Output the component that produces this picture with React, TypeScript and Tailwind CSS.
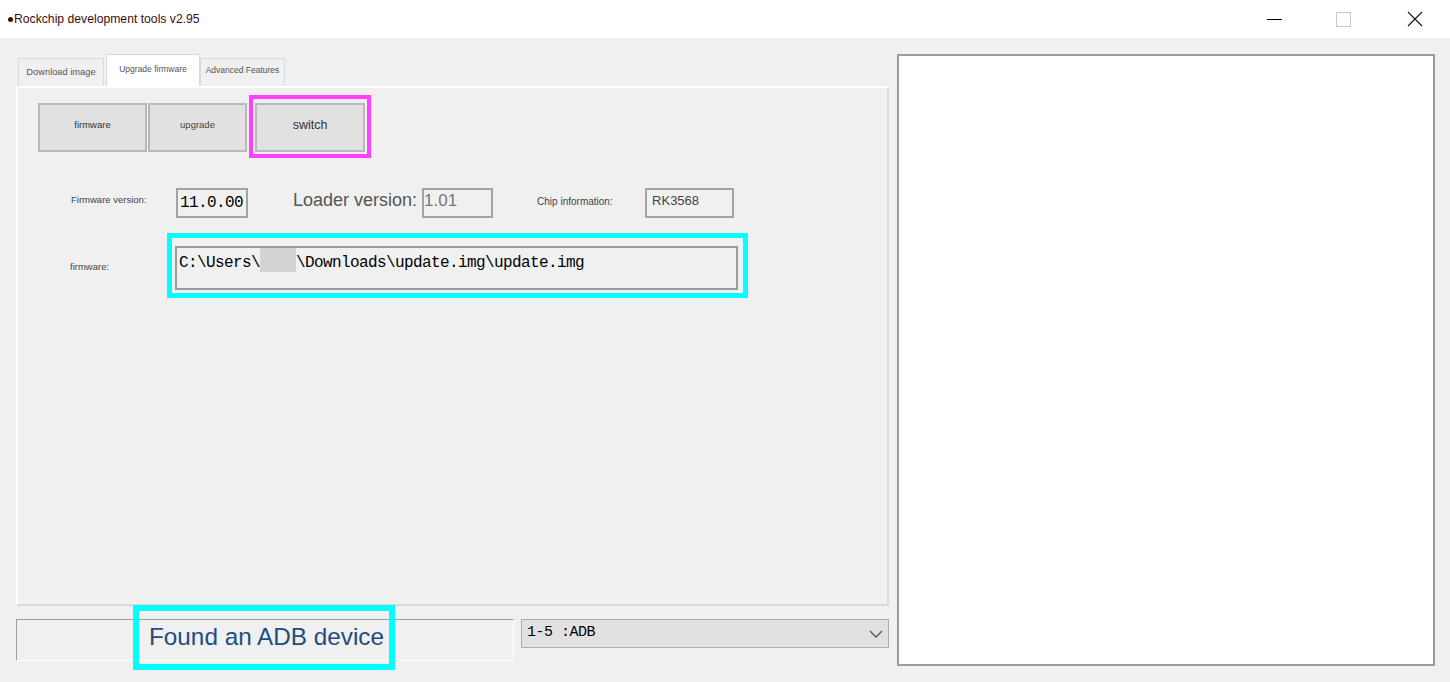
export default function App() {
  return (
    <div className="w-[1450px] h-[682px] bg-[#f0f0f0] overflow-hidden font-['Liberation_Sans',Arial,sans-serif]">
      {/* title bar */}
      <div className="h-[38px] bg-white flex items-center relative">
        <div className="flex items-center pl-[8px] text-[12.2px] text-[#3c0d0d]">
          <span className="w-[5px] h-[5px] rounded-full bg-[#3c0d0d] mr-[1px] mt-[1px]"></span>
          Rockchip development tools v2.95
        </div>
        <div className="ml-auto flex items-center h-full">
          <div className="w-[15px] h-[1px] bg-black mr-[54px]"></div>
          <div className="w-[15px] h-[15px] border border-[#c8c8c8] mr-[56px]"></div>
          <svg width="16" height="16" viewBox="0 0 16 16" className="mr-[27px]">
            <path d="M1 1 L15 15 M15 1 L1 15" stroke="#111" strokeWidth="1.1" fill="none" />
          </svg>
        </div>
      </div>

      <div className="flex pl-[16px] pt-[16px] gap-[8px]">
        {/* left column */}
        <div className="w-[873px] flex flex-col">
          {/* tabs */}
          <div className="h-[32px] flex items-end pl-[2px] text-[#555]">
            <div className="w-[86px] h-[28px] border border-b-0 border-[#d9d9d9] bg-[#f0f0f0] flex items-center justify-center text-[9.3px]">
              Download image
            </div>
            <div className="w-[94px] h-[32px] ml-[2px] border border-b-0 border-[#d9d9d9] bg-white flex items-center justify-center text-[8.5px] pb-[2px]">
              Upgrade firmware
            </div>
            <div className="w-[85px] h-[27px] mb-[1px] border border-b-0 border-[#d9d9d9] bg-[#f0f0f0] flex items-center justify-center text-[8.5px] pb-[3px]">
              Advanced Features
            </div>
          </div>

          {/* panel */}
          <div className="h-[520px] border-2 border-t-white border-l-white border-r-[#dadada] border-b-[#dadada] bg-[#f0f0f0] flex flex-col">
            <div className="flex items-start pl-[20px] pt-[7px]">
              <div className="mt-[8px] w-[109px] h-[49px] bg-[#e1e1e1] border-2 border-[#b9b9b9] flex items-center justify-center pb-[4px] text-[9.5px] text-[#333]">
                firmware
              </div>
              <div className="mt-[8px] ml-[1px] w-[99px] h-[49px] bg-[#e1e1e1] border-2 border-[#b9b9b9] flex items-center justify-center pb-[4px] text-[9.5px] text-[#444]">
                upgrade
              </div>
              <div className="ml-[2px] border-[4px] border-[#ff40ff] pt-[4px] pb-[2px] px-[2px]">
                <div className="w-[110px] h-[49px] bg-[#e1e1e1] border-2 border-[#b9b9b9] flex items-center justify-center pb-[4px] text-[12.5px] text-[#333]">
                  switch
                </div>
              </div>
            </div>

            <div className="flex items-center mt-[30px] h-[30px]">
              <div className="ml-[53px] w-[105px] text-[9.5px] text-[#444] -mt-[6px]">Firmware version:</div>
              <div className="w-[72px] h-[30px] border-2 border-[#a3a3a3] flex items-center pl-[2px] font-['Liberation_Mono',monospace] text-[16px] tracking-[-0.6px] text-black">
                11.0.00
              </div>
              <div className="ml-[45px] text-[18px] text-[#555] -mt-[6px]">Loader version:</div>
              <div className="ml-[5px] w-[71px] h-[30px] border-2 border-[#a3a3a3] flex items-start -mt-[0px] pl-0 text-[17px] leading-[22px] text-[#777]">
                1.01
              </div>
              <div className="ml-[44px] w-[108px] text-[10px] text-[#444] -mt-[4px]">Chip information:</div>
              <div className="w-[89px] h-[30px] border-2 border-[#a3a3a3] flex items-start pt-[1px] pl-[5px] text-[13px] text-[#444]">
                RK3568
              </div>
            </div>

            <div className="flex items-center mt-[15px]">
              <div className="ml-[52px] w-[97px] text-[9.5px] text-[#444] mt-[3px]">firmware:</div>
              <div className="border-[5px] border-[#00ffff] pl-[3px] pr-[5px] pt-[8px] pb-[3px]">
                <div className="w-[563px] h-[44px] border-2 border-[#9c9c9c] flex items-start pt-[0px] pl-[2px] font-['Liberation_Mono',monospace] text-[16px] tracking-[-0.6px] text-black">
                  <span className="pt-[3px]">C:\Users\</span>
                  <span className="w-[36px] h-[24px] bg-[#d3d3d3]"></span>
                  <span className="pt-[3px]">\Downloads\update.img\update.img</span>
                </div>
              </div>
            </div>
          </div>

          {/* status row */}
          <div className="flex items-start gap-[7px] mt-[13px] relative">
            <div className="w-[498px] h-[42px] border border-t-[#a0a0a0] border-l-[#a0a0a0] border-r-white border-b-white"></div>
            <div className="w-[368px] h-[29px] bg-[#e1e1e1] border border-[#adadad] flex items-center pl-[5px] font-['Liberation_Mono',monospace] text-[15px] tracking-[-0.5px] text-black">
              <span>1-5 :ADB</span>
              <svg width="14" height="8" viewBox="0 0 14 8" className="ml-auto mr-[5px]">
                <path d="M1 1 L7 7 L13 1" stroke="#555" strokeWidth="1.3" fill="none" />
              </svg>
            </div>
            <div className="absolute left-[117px] top-[-14px] w-[262px] h-[65px] border-[6px] border-[#00ffff] flex items-center pl-[10px] text-[24.3px] text-[#214d80]">
              Found an ADB device
            </div>
          </div>
        </div>

        {/* right output box */}
        <div className="w-[538px] h-[612px] border-2 border-[#9a9ca0] bg-white"></div>
      </div>
    </div>
  );
}
